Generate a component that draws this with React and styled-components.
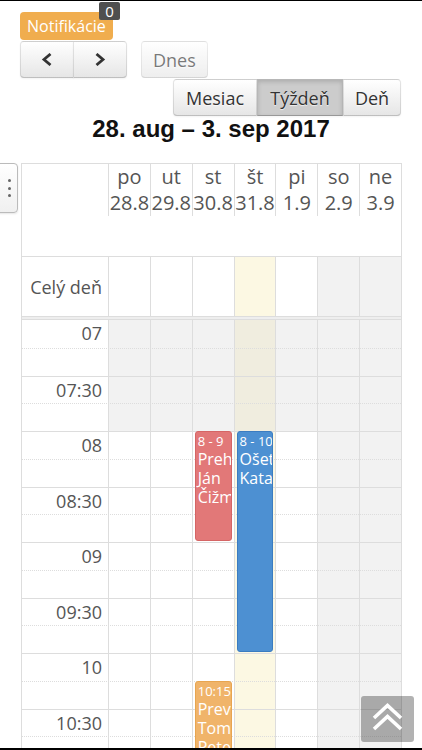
import React from "react";
import styled, { createGlobalStyle } from "styled-components";

const GlobalStyle = createGlobalStyle`
  html, body {
    margin: 0;
    padding: 0;
    background: #fff;
  }
  body {
    font-family: "Open Sans", "Noto Sans", sans-serif;
    color: #333;
  }
  * {
    box-sizing: border-box;
  }
`;

const SLOT = 27.75; // 15 minutes
const HOUR = SLOT * 4;
const START_HOUR = 7;

const days = [
  { name: "po", date: "28.8" },
  { name: "ut", date: "29.8" },
  { name: "st", date: "30.8" },
  { name: "št", date: "31.8", today: true },
  { name: "pi", date: "1.9" },
  { name: "so", date: "2.9", weekend: true },
  { name: "ne", date: "3.9", weekend: true },
];

const events = [
  { day: 2, start: 8, end: 9, time: "8 - 9", title: "Prehliadka Ján Čižmár", color: "#e27878", border: "#d56565" },
  { day: 3, start: 8, end: 10, time: "8 - 10", title: "Ošetrenie Katarína", color: "#4d90d2", border: "#3b7cc0" },
  { day: 2, start: 10.25, end: 11.25, time: "10:15 - 11:15", title: "Prevencia Tomáš Peterka", color: "#f0b46a", border: "#e8a550" },
];

const views = [
  { label: "Mesiac", width: "84px" },
  { label: "Týždeň", width: "86px", active: true },
  { label: "Deň", width: "58px" },
];

const slots = Array.from({ length: 20 }, (_, i) => {
  const minutes = START_HOUR * 60 + i * 15;
  const h = String(Math.floor(minutes / 60)).padStart(2, "0");
  const m = minutes % 60;
  let label = "";
  if (m === 0) label = h;
  if (m === 30) label = `${h}:30`;
  return { label, half: m % 30 === 0 };
});

const Screen = styled.div`
  position: relative;
  height: 750px;
  overflow: hidden;
  display: flex;
  flex-direction: column;
  border-top: 1px solid #000;
  border-bottom: 2px solid #000;
`;

const Toolbar = styled.div`
  display: flex;
  flex-direction: column;
  padding: 11px 21px 0 20px;
`;

const NotifyRow = styled.div`
  display: flex;
`;

const NotifyButton = styled.button`
  position: relative;
  height: 28px;
  padding: 0 7px;
  border: none;
  border-radius: 4px;
  background: #f0ad4e;
  color: #fff;
  font-family: "Open Sans", sans-serif;
  font-size: 16px;
`;

const Badge = styled.span`
  position: absolute;
  left: 79px;
  top: -10px;
  width: 21px;
  height: 18px;
  background: #4f4f4f;
  color: #fff;
  font-size: 15px;
  line-height: 18px;
  text-align: center;
  border-radius: 2px;
`;

const NavRow = styled.div`
  display: flex;
  gap: 14px;
  margin-top: 1px;
`;

const Group = styled.div`
  display: flex;
`;

const ToolButton = styled.button`
  height: 37px;
  width: ${(p) => p.$width || "auto"};
  padding: 0 11px;
  display: flex;
  align-items: center;
  justify-content: center;
  font-family: "Open Sans", sans-serif;
  font-size: 18px;
  color: #333;
  background-color: #f5f5f5;
  background-image: linear-gradient(to bottom, #fff, #e6e6e6);
  border: 1px solid;
  border-color: rgba(0, 0, 0, 0.1) rgba(0, 0, 0, 0.1) rgba(0, 0, 0, 0.25);
  border-radius: 4px;
  box-shadow: inset 0 1px 0 rgba(255, 255, 255, 0.2), 0 1px 2px rgba(0, 0, 0, 0.05);
  text-shadow: 0 1px 1px rgba(255, 255, 255, 0.75);

  ${Group} > & {
    border-radius: 0;
  }
  ${Group} > & + & {
    margin-left: -1px;
  }
  ${Group} > &:first-child {
    border-radius: 4px 0 0 4px;
  }
  ${Group} > &:last-child {
    border-radius: 0 4px 4px 0;
  }

  &[data-active="true"] {
    background-color: #ccc;
    background-image: none;
    box-shadow: inset 0 2px 4px rgba(0, 0, 0, 0.15), 0 1px 2px rgba(0, 0, 0, 0.05);
  }

  &:disabled {
    opacity: 0.65;
    box-shadow: none;
    color: #333;
  }
`;

const ViewRow = styled.div`
  display: flex;
  justify-content: flex-end;
  margin-top: 1px;
`;

const Title = styled.h2`
  margin: 0 0 21px;
  font-family: "Liberation Sans", Arial, sans-serif;
  font-size: 24px;
  font-weight: 700;
  line-height: 26px;
  text-align: center;
  color: #111;
`;

const Calendar = styled.div`
  position: relative;
  flex: 1;
  min-height: 0;
  width: 381px;
  margin-left: 21px;
  display: flex;
  flex-direction: column;
  border: 1px solid #ddd;
  border-bottom: none;
`;

const SideTab = styled.div`
  position: absolute;
  left: -28px;
  top: -1px;
  width: 24px;
  height: 50px;
  display: flex;
  flex-direction: column;
  align-items: flex-end;
  justify-content: center;
  gap: 4.5px;
  padding-right: 6px;
  background: linear-gradient(to bottom, #fff, #f0f0f0);
  border: 1px solid #bbb;
  border-radius: 4px;
  box-shadow: 0 1px 2px rgba(0, 0, 0, 0.1);
`;

const Dot = styled.span`
  width: 3px;
  height: 3px;
  border-radius: 50%;
  background: #666;
`;

const Columns = styled.div`
  display: grid;
  grid-template-columns: 86px repeat(7, 1fr);
`;

const HeadRow = styled(Columns)`
  height: 92px;
  align-items: start;
`;

const HeadCell = styled.div`
  height: 52px;
  border-left: ${(p) => (p.$axis ? "none" : "1px solid #ddd")};
  font-size: 20px;
  line-height: 26px;
  color: #555;
  text-align: center;
  white-space: nowrap;
`;

const AllDayRow = styled(Columns)`
  height: 60px;
  border-top: 1px solid #ddd;
`;

const AxisLabel = styled.div`
  display: flex;
  align-items: center;
  justify-content: flex-end;
  padding-right: 6px;
  font-size: 18px;
  color: #555;
  white-space: nowrap;
`;

const dayBg = (p) => (p.$today ? "#fcf8e3" : p.$weekend ? "#f2f2f2" : "#fff");

const DayCell = styled.div`
  border-left: 1px solid #ddd;
  background: ${dayBg};
`;

const Divider = styled.div`
  height: 4px;
  background: #eee;
  border-top: 1px solid #ddd;
  border-bottom: 1px solid #ddd;
`;

const TimeGrid = styled.div`
  flex: 1;
  min-height: 0;
  overflow: hidden;
  display: grid;
  grid-template-areas: "stack";
  align-items: start;

  & > * {
    grid-area: stack;
  }
`;

const BgLayer = styled(Columns)`
  align-self: stretch;
`;

const DayBg = styled.div`
  border-left: ${(p) => (p.$axis ? "none" : "1px solid #ddd")};
  background: ${(p) => (p.$axis ? "#fff" : p.$today ? "#fcf8e3" : "#fff")};
`;

const NonBusiness = styled.div`
  height: ${(p) => (p.$full ? "100%" : `${HOUR}px`)};
  background: rgba(215, 215, 215, 0.33);
`;

const SlotLayer = styled.div`
  display: flex;
  flex-direction: column;
`;

const SlotRow = styled.div`
  height: ${SLOT}px;
  flex-shrink: 0;
  border-top: ${(p) => (p.$first ? "none" : `1px ${p.$half ? "solid" : "dotted"} #ddd`)};
  display: grid;
  grid-template-columns: 86px 1fr;
`;

const SlotLabel = styled.div`
  text-align: right;
  padding-right: 6px;
  font-size: 18px;
  line-height: 26px;
  color: #555;
`;

const EventLayer = styled(Columns)`
  align-self: stretch;
`;

const DayEvents = styled.div`
  position: relative;
  border-left: 1px solid transparent;
`;

const EventBox = styled.div`
  position: absolute;
  left: 2px;
  right: 2px;
  overflow: hidden;
  padding: 0 2px;
  border: 1px solid ${(p) => p.$border};
  border-radius: 3px;
  background: ${(p) => p.$color};
  color: #fff;
`;

const EventTime = styled.div`
  font-size: 13px;
  line-height: 18px;
  white-space: nowrap;
`;

const EventTitle = styled.div`
  font-size: 16px;
  line-height: 19px;
`;

const ScrollTop = styled.button`
  position: absolute;
  right: 8px;
  bottom: 6px;
  width: 53px;
  height: 46px;
  padding: 0;
  border: none;
  border-radius: 3px;
  background: rgba(0, 0, 0, 0.3);
  display: flex;
  align-items: center;
  justify-content: center;
`;

const Chevron = ({ dir }) => (
  <svg width="12" height="13" viewBox="0 0 12 13">
    <polyline
      points={dir === "left" ? "9.5,1 3,6.5 9.5,12" : "2.5,1 9,6.5 2.5,12"}
      fill="none"
      stroke="#333"
      strokeWidth="2.8"
    />
  </svg>
);

const DoubleUp = () => (
  <svg width="53" height="46" viewBox="0 0 53 46">
    <g fill="none" stroke="#fff" strokeWidth="3.6">
      <polyline points="13,22 26.5,9.5 40,22" />
      <polyline points="13,33 26.5,20.5 40,33" />
    </g>
  </svg>
);

export default function App() {
  return (
    <Screen>
      <GlobalStyle />
      <Toolbar>
        <NotifyRow>
          <NotifyButton>
            Notifikácie
            <Badge>0</Badge>
          </NotifyButton>
        </NotifyRow>
        <NavRow>
          <Group>
            <ToolButton $width="54px">
              <Chevron dir="left" />
            </ToolButton>
            <ToolButton $width="54px">
              <Chevron dir="right" />
            </ToolButton>
          </Group>
          <ToolButton disabled>Dnes</ToolButton>
        </NavRow>
        <ViewRow>
          <Group>
            {views.map((v) => (
              <ToolButton key={v.label} $width={v.width} data-active={v.active ? "true" : "false"}>
                {v.label}
              </ToolButton>
            ))}
          </Group>
        </ViewRow>
      </Toolbar>
      <Title>28. aug – 3. sep 2017</Title>

      <Calendar>
        <SideTab>
          <Dot />
          <Dot />
          <Dot />
        </SideTab>

        <HeadRow>
          <HeadCell $axis />
          {days.map((d) => (
            <HeadCell key={d.date}>
              {d.name}
              <br />
              {d.date}
            </HeadCell>
          ))}
        </HeadRow>

        <AllDayRow>
          <AxisLabel>Celý deň</AxisLabel>
          {days.map((d) => (
            <DayCell key={d.date} $today={d.today} $weekend={d.weekend} />
          ))}
        </AllDayRow>

        <Divider />

        <TimeGrid>
          <BgLayer>
            <DayBg $axis />
            {days.map((d) => (
              <DayBg key={d.date} $today={d.today}>
                <NonBusiness $full={d.weekend} />
              </DayBg>
            ))}
          </BgLayer>

          <SlotLayer>
            {slots.map((s, i) => (
              <SlotRow key={i} $first={i === 0} $half={s.half}>
                <SlotLabel>{s.label}</SlotLabel>
                <div />
              </SlotRow>
            ))}
          </SlotLayer>

          <EventLayer>
            <div />
            {days.map((d, di) => (
              <DayEvents key={d.date}>
                {events
                  .filter((e) => e.day === di)
                  .map((e) => (
                    <EventBox
                      key={e.time}
                      $color={e.color}
                      $border={e.border}
                      style={{
                        top: (e.start - START_HOUR) * HOUR,
                        height: (e.end - e.start) * HOUR - 1,
                      }}
                    >
                      <EventTime>{e.time}</EventTime>
                      <EventTitle>{e.title}</EventTitle>
                    </EventBox>
                  ))}
              </DayEvents>
            ))}
          </EventLayer>
        </TimeGrid>
      </Calendar>

      <ScrollTop>
        <DoubleUp />
      </ScrollTop>
    </Screen>
  );
}
